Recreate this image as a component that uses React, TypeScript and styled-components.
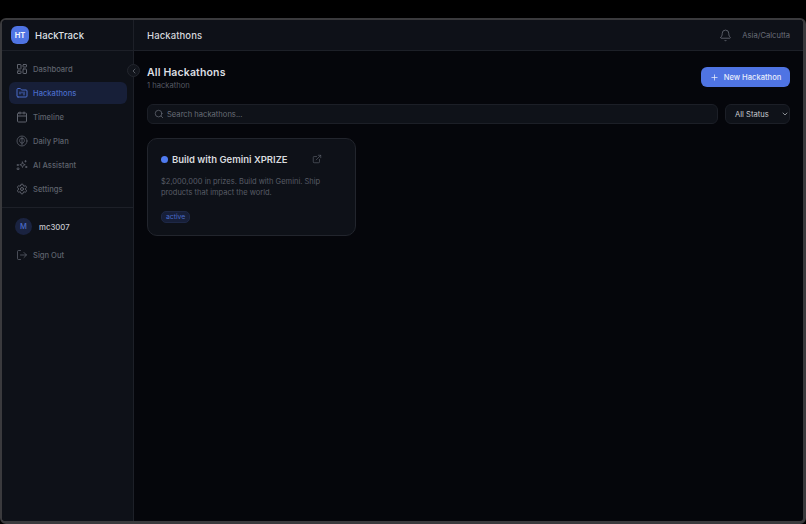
import styled, { createGlobalStyle } from "styled-components";
import {
  Bell,
  Calendar,
  ChevronDown,
  ChevronLeft,
  ExternalLink,
  FolderKanban,
  LayoutDashboard,
  LogOut,
  Plus,
  Search,
  Settings,
} from "lucide-react";

const GlobalStyle = createGlobalStyle`
  html, body {
    margin: 0;
    padding: 0;
    height: 100%;
    background: #000;
    font-family: Inter, "Liberation Sans", sans-serif;
    overflow: hidden;
  }
  #root { height: 100%; }
  * { box-sizing: border-box; }
`;

const Screen = styled.div`
  width: 806px;
  height: 524px;
  padding-top: 18px;
  background: #000;
`;
const Frame = styled.div`
  height: 506px;
  display: flex;
  border: 2px solid #3a3a3d;
  border-bottom-width: 3px;
  border-right-width: 3px;
  border-radius: 6px;
  background: #05060b;
  overflow: hidden;
`;
const Sidebar = styled.aside`
  position: relative;
  width: 132px;
  flex-shrink: 0;
  display: flex;
  flex-direction: column;
  background: #0e1118;
  border-right: 1px solid #1d2028;
`;
const Brand = styled.div`
  height: 31px;
  display: flex;
  align-items: center;
  gap: 6px;
  padding-left: 9px;
  border-bottom: 1px solid #1d2028;
`;
const Logo = styled.div`
  width: 18px;
  height: 18px;
  border-radius: 6px;
  display: flex;
  align-items: center;
  justify-content: center;
  background: #4f74e3;
  color: #f2f5fd;
  font-size: 7.5px;
  font-weight: 700;
`;
const BrandName = styled.span`
  color: #dfe1e6;
  font-size: 9.5px;
  font-weight: 500;
  letter-spacing: 0.1px;
`;
const CollapseButton = styled.button`
  position: absolute;
  top: 44px;
  right: -7px;
  width: 13px;
  height: 13px;
  padding: 0;
  display: flex;
  align-items: center;
  justify-content: center;
  border-radius: 50%;
  border: 1px solid #23262e;
  background: #12151c;
  color: #777b85;
  z-index: 2;
`;
const Nav = styled.nav`
  display: flex;
  flex-direction: column;
  gap: 2px;
  padding: 7px 6px 7px 7px;
  border-bottom: 1px solid #1d2028;
`;
const NavItem = styled.a<{ $active?: boolean }>`
  height: 22px;
  display: flex;
  align-items: center;
  gap: 5px;
  padding-left: 7px;
  border-radius: 6px;
  font-size: 7.6px;
  font-weight: 500;
  color: ${(p) => (p.$active ? "#4a6cc9" : "#5f636d")};
  background: ${(p) => (p.$active ? "#171f38" : "transparent")};
`;
const UserSection = styled.div`
  display: flex;
  flex-direction: column;
  gap: 9px;
  padding: 10px 7px;
`;
const UserRow = styled.div`
  display: flex;
  align-items: center;
  gap: 7px;
  padding-left: 6px;
`;
const Avatar = styled.div`
  width: 17px;
  height: 17px;
  border-radius: 50%;
  display: flex;
  align-items: center;
  justify-content: center;
  background: #1a2340;
  color: #4a6cc9;
  font-size: 7.5px;
  font-weight: 500;
`;
const UserName = styled.span`
  color: #c5c7cd;
  font-size: 7.8px;
  font-weight: 500;
`;
const Main = styled.div`
  flex: 1;
  min-width: 0;
  display: flex;
  flex-direction: column;
`;
const TopBar = styled.header`
  height: 31px;
  flex-shrink: 0;
  display: flex;
  align-items: center;
  justify-content: space-between;
  padding: 0 13px;
  background: #0e1118;
  border-bottom: 1px solid #1d2028;
`;
const PageTitle = styled.h1`
  margin: 0;
  color: #d5d7dc;
  font-size: 9.5px;
  font-weight: 500;
  letter-spacing: 0.1px;
`;
const TopRight = styled.div`
  display: flex;
  align-items: center;
  gap: 10px;
  color: #6a6e78;
`;
const Zone = styled.span`
  font-size: 7.6px;
`;
const Content = styled.main`
  flex: 1;
  padding: 14px 13px 0;
`;
const Heading = styled.div`
  height: 27px;
  display: flex;
  align-items: flex-start;
  justify-content: space-between;
`;
const HeadingText = styled.div`
  display: flex;
  flex-direction: column;
  gap: 0;
`;
const Title = styled.h2`
  margin: 0;
  color: #dcdee2;
  font-size: 10.5px;
  line-height: 15px;
  font-weight: 600;
  letter-spacing: 0.15px;
`;
const Subtitle = styled.span`
  color: #555963;
  font-size: 7.6px;
  line-height: 11px;
`;
const NewButton = styled.button`
  width: 89px;
  height: 20px;
  margin-top: 2px;
  padding: 0;
  display: flex;
  align-items: center;
  justify-content: center;
  gap: 5px;
  border: none;
  border-radius: 6px;
  background: #4f74e3;
  color: #e8edfb;
  font-family: inherit;
  font-size: 7.6px;
  font-weight: 500;
  white-space: nowrap;
`;
const Filters = styled.div`
  display: flex;
  gap: 7px;
  margin-top: 12px;
`;
const SearchBox = styled.div`
  flex: 1;
  height: 20px;
  display: flex;
  align-items: center;
  gap: 3px;
  padding-left: 6px;
  border: 1px solid #1c1f27;
  border-radius: 6px;
  background: #0f1219;
  color: #686c76;
  font-size: 7.6px;
`;
const StatusSelect = styled.div`
  width: 65px;
  height: 20px;
  display: flex;
  align-items: center;
  justify-content: space-between;
  padding: 0 0 0 9px;
  border: 1px solid #1c1f27;
  border-radius: 6px;
  background: #0f1219;
  color: #c6c8cd;
  font-size: 7.6px;
`;
const Card = styled.article`
  width: 209px;
  height: 98px;
  margin-top: 14px;
  padding: 13px 13px 0;
  border: 1px solid #22252d;
  border-radius: 10px;
  background: #0e1118;
`;
const CardHead = styled.div`
  display: flex;
  align-items: center;
  height: 14px;
`;
const Dot = styled.span`
  width: 7px;
  height: 7px;
  flex-shrink: 0;
  margin-right: 4px;
  border-radius: 50%;
  background: #4f7bf0;
`;
const CardTitle = styled.h3`
  margin: 0;
  color: #d9dbdf;
  font-size: 9.5px;
  font-weight: 600;
`;
const CardLink = styled.span`
  display: flex;
  margin-left: 24px;
  color: #5f636d;
`;
const CardText = styled.p`
  margin: 11px 0 0;
  width: 175px;
  color: #585c66;
  font-size: 7.5px;
  line-height: 10.5px;
`;
const Badge = styled.span`
  display: inline-block;
  margin-top: 13px;
  padding: 0 4px;
  height: 12px;
  line-height: 10px;
  border: 1px solid #1e2846;
  border-radius: 5px;
  background: #171f38;
  color: #4a6cc9;
  font-size: 6.8px;
`;

// no lucide match for these two, drawn by hand
function PlanIcon({ size }: { size: number }) {
  return (
    <svg width={size} height={size} viewBox="0 0 24 24" fill="none" stroke="currentColor" strokeWidth={1.5} strokeLinecap="round">
      <circle cx="12" cy="12" r="10" />
      <path d="M12 4v16" />
      <path d="M12 7c-3-1-5 1-4 3-1.500 1-1 4 1 4.500 0 2 2 2.500 3 1.500" />
      <path d="M12 7c3-1 5 1 4 3 1.500 1 1 4-1 4.500 0 2-2 2.500-3 1.500" />
    </svg>
  );
}

function AssistantIcon({ size }: { size: number }) {
  return (
    <svg width={size} height={size} viewBox="0 0 24 24" fill="none" stroke="currentColor" strokeWidth={1.5} strokeLinejoin="round" strokeLinecap="round">
      <path d="M13 6l1.500 4 4 1.500-4 1.500-1.500 4-1.500-4-4-1.500 4-1.500z" />
      <path d="M19 3v3M17.500 4.500h3" />
      <rect x="3" y="18" width="3" height="3" />
      <rect x="3" y="11" width="2" height="2" />
      <rect x="20" y="15" width="2" height="2" />
    </svg>
  );
}

const navItems = [
  { label: "Dashboard", icon: LayoutDashboard },
  { label: "Hackathons", icon: FolderKanban, active: true },
  { label: "Timeline", icon: Calendar },
  { label: "Daily Plan", icon: PlanIcon },
  { label: "AI Assistant", icon: AssistantIcon },
  { label: "Settings", icon: Settings },
];

export default function App() {
  return (
    <Screen>
      <GlobalStyle />
      <Frame>
        <Sidebar>
          <Brand>
            <Logo>HT</Logo>
            <BrandName>HackTrack</BrandName>
          </Brand>
          <CollapseButton>
            <ChevronLeft size={8} />
          </CollapseButton>
          <Nav>
            {navItems.map((item) => (
              <NavItem key={item.label} $active={item.active}>
                <item.icon size={12} />
                {item.label}
              </NavItem>
            ))}
          </Nav>
          <UserSection>
            <UserRow>
              <Avatar>M</Avatar>
              <UserName>mc3007</UserName>
            </UserRow>
            <NavItem>
              <LogOut size={12} strokeWidth={1.5} />
              Sign Out
            </NavItem>
          </UserSection>
        </Sidebar>
        <Main>
          <TopBar>
            <PageTitle>Hackathons</PageTitle>
            <TopRight>
              <Bell size={13} strokeWidth={1.5} />
              <Zone>Asia/Calcutta</Zone>
            </TopRight>
          </TopBar>
          <Content>
            <Heading>
              <HeadingText>
                <Title>All Hackathons</Title>
                <Subtitle>1 hackathon</Subtitle>
              </HeadingText>
              <NewButton>
                <Plus size={9} strokeWidth={2} />
                New Hackathon
              </NewButton>
            </Heading>
            <Filters>
              <SearchBox>
                <Search size={10} strokeWidth={1.75} />
                Search hackathons...
              </SearchBox>
              <StatusSelect>
                All Status
                <ChevronDown size={8} strokeWidth={2} />
              </StatusSelect>
            </Filters>
            <Card>
              <CardHead>
                <Dot />
                <CardTitle>Build with Gemini XPRIZE</CardTitle>
                <CardLink>
                  <ExternalLink size={10} strokeWidth={1.5} />
                </CardLink>
              </CardHead>
              <CardText>
                $2,000,000 in prizes. Build with Gemini. Ship products that impact the world.
              </CardText>
              <Badge>active</Badge>
            </Card>
          </Content>
        </Main>
      </Frame>
    </Screen>
  );
}
